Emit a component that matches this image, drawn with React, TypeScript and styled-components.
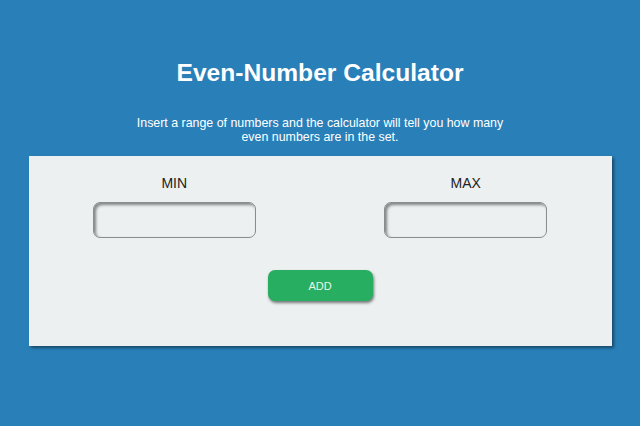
import React from 'react'
import styled, { createGlobalStyle } from 'styled-components';

const Global = createGlobalStyle`
  html, body {
    margin: 0;
    padding: 0;
    background: #2980b9;
    font-family: "Liberation Sans", Arial, sans-serif;
  }
`;

const Page = styled.div`
  display: flex;
  flex-direction: column;
  align-items: center;
  min-height: 426px;
  padding-top: 59px;
  box-sizing: border-box;
`;

const Title = styled.h1`
  margin: 0;
  font-size: 24.6px;
  line-height: 28px;
  font-weight: bold;
  color: #fff;
`;

const Intro = styled.p`
  margin: 29px 0 0;
  width: 376px;
  text-align: center;
  font-size: 12.4px;
  line-height: 14px;
  color: #fff;
`;

const Card = styled.div`
  margin-top: 12px;
  width: 583px;
  background: #ecf0f1;
  box-shadow: 2px 2px 3px rgba(0, 0, 0, 0.45);
  padding: 19px 0 45px;
  display: flex;
  flex-direction: column;
  align-items: center;
`;

const Fields = styled.div`
  width: 100%;
  display: grid;
  grid-template-columns: 1fr 1fr;
`;

const Field = styled.div`
  display: flex;
  flex-direction: column;
  align-items: center;
  gap: 11px;
`;

const Label = styled.label`
  font-size: 14px;
  line-height: 16px;
  color: #222;
`;

const Input = styled.input`
  width: 163px;
  height: 36px;
  box-sizing: border-box;
  border: 1px solid #8a8d8f;
  border-radius: 7px;
  background: #ecf0f1;
  box-shadow: inset 2px 2px 3px rgba(0, 0, 0, 0.45);
  outline: none;
`;

const AddButton = styled.button`
  margin-top: 32px;
  width: 105px;
  height: 31px;
  border: none;
  border-radius: 7px;
  background: #27ae60;
  color: #e8f5e9;
  font-family: "Liberation Sans", Arial, sans-serif;
  font-size: 11px;
  box-shadow: 1px 2px 3px rgba(0, 0, 0, 0.5);
  cursor: pointer;
`;

export default function App() {
  return (
    <>
      <Global />
      <Page>
        <Title>Even-Number Calculator</Title>
        <Intro>Insert a range of numbers and the calculator will tell you how many even numbers are in the set.</Intro>
        <Card>
          <Fields>
            <Field>
              <Label>MIN</Label>
              <Input type="number" />
            </Field>
            <Field>
              <Label>MAX</Label>
              <Input type="number" />
            </Field>
          </Fields>
          <AddButton>ADD</AddButton>
        </Card>
      </Page>
    </>
  );
}
